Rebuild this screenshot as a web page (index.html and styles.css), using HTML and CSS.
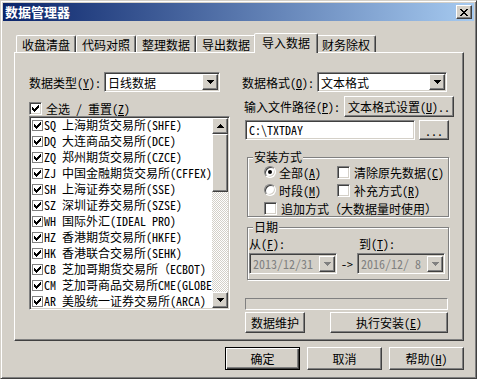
FILE: index.html
```html
<!DOCTYPE html>
<html lang="zh-CN">
<head>
    <meta charset="UTF-8">
    <title>数据管理器</title>
    <link rel="stylesheet" href="styles.css">
</head>
<body>
    <div class="window">
        <div class="titlebar">
            <span class="title">数据管理器</span>
            <span class="close">
                <svg width="8" height="7" viewBox="0 0 8 7"><path d="M0 0h2l2 2.3 2-2.3h2l-3 3.5 3 3.5h-2l-2-2.3-2 2.3h-2l3-3.5z"/></svg>
            </span>
        </div>
        <div class="content">
            <div class="tabs">
                <div class="tab">收盘清盘</div>
                <div class="tab">代码对照</div>
                <div class="tab">整理数据</div>
                <div class="tab">导出数据</div>
                <div class="tab active">导入数据</div>
                <div class="tab">财务除权</div>
            </div>
            <div class="panel">
                <div class="col-left">
                    <div class="row">
                        <span class="label">数据类型(<u>Y</u>):</span>
                        <div class="combo combo-type">
                            <span class="combo-text">日线数据</span>
                            <span class="drop"><svg width="7" height="4"><path d="M0 0h7L3.5 4z"/></svg></span>
                        </div>
                    </div>
                    <div class="check-row">
                        <span class="check"><svg width="7" height="7"><path d="M0 2l2 2 5-4v3l-5 4-2-2z"/></svg></span>
                        <span>全选 / 重置(<u>Z</u>)</span>
                    </div>
                    <div class="list">
                        <div class="list-items">
                            <div class="item"><span class="lc"><svg width="7" height="7"><path d="M0 2l2 2 5-4v3l-5 4-2-2z"/></svg></span>SQ 上海期货交易所(SHFE)</div>
                            <div class="item"><span class="lc"><svg width="7" height="7"><path d="M0 2l2 2 5-4v3l-5 4-2-2z"/></svg></span>DQ 大连商品交易所(DCE)</div>
                            <div class="item"><span class="lc"><svg width="7" height="7"><path d="M0 2l2 2 5-4v3l-5 4-2-2z"/></svg></span>ZQ 郑州期货交易所(CZCE)</div>
                            <div class="item"><span class="lc"><svg width="7" height="7"><path d="M0 2l2 2 5-4v3l-5 4-2-2z"/></svg></span>ZJ 中国金融期货交易所(CFFEX)</div>
                            <div class="item"><span class="lc"><svg width="7" height="7"><path d="M0 2l2 2 5-4v3l-5 4-2-2z"/></svg></span>SH 上海证券交易所(SSE)</div>
                            <div class="item"><span class="lc"><svg width="7" height="7"><path d="M0 2l2 2 5-4v3l-5 4-2-2z"/></svg></span>SZ 深圳证券交易所(SZSE)</div>
                            <div class="item"><span class="lc"><svg width="7" height="7"><path d="M0 2l2 2 5-4v3l-5 4-2-2z"/></svg></span>WH 国际外汇(IDEAL PRO)</div>
                            <div class="item"><span class="lc"><svg width="7" height="7"><path d="M0 2l2 2 5-4v3l-5 4-2-2z"/></svg></span>HZ 香港期货交易所(HKFE)</div>
                            <div class="item"><span class="lc"><svg width="7" height="7"><path d="M0 2l2 2 5-4v3l-5 4-2-2z"/></svg></span>HK 香港联合交易所(SEHK)</div>
                            <div class="item"><span class="lc"><svg width="7" height="7"><path d="M0 2l2 2 5-4v3l-5 4-2-2z"/></svg></span>CB 芝加哥期货交易所（ECBOT)</div>
                            <div class="item"><span class="lc"><svg width="7" height="7"><path d="M0 2l2 2 5-4v3l-5 4-2-2z"/></svg></span>CM 芝加哥商品交易所CME(GLOBEX)</div>
                            <div class="item"><span class="lc"><svg width="7" height="7"><path d="M0 2l2 2 5-4v3l-5 4-2-2z"/></svg></span>AR 美股统一证券交易所(ARCA)</div>
                        </div>
                        <div class="vscroll">
                            <span class="sbtn"><svg width="7" height="4"><path d="M3.5 0L7 4H0z"/></svg></span>
                            <span class="thumb"></span>
                            <span class="track"></span>
                            <span class="sbtn"><svg width="7" height="4"><path d="M0 0h7L3.5 4z"/></svg></span>
                        </div>
                    </div>
                </div>

                <div class="col-right">
                    <div class="row">
                        <span class="label">数据格式(<u>O</u>):</span>
                        <div class="combo combo-format">
                            <span class="combo-text">文本格式</span>
                            <span class="drop"><svg width="7" height="4"><path d="M0 0h7L3.5 4z"/></svg></span>
                        </div>
                    </div>
                    <div class="row row-path">
                        <span class="label">输入文件路径(<u>P</u>):</span>
                        <span class="btn btn-setup">文本格式设置(<u>U</u>)..</span>
                    </div>
                    <div class="row row-input">
                        <span class="field">C:\TXTDAY</span>
                        <span class="btn btn-browse">...</span>
                    </div>

                    <fieldset class="group group-mode">
                        <legend>安装方式</legend>
                        <div class="opts">
                            <div class="opt"><span class="radio on"><span class="dot"></span></span><span class="opt-text">全部(<u>A</u>)</span></div>
                            <div class="opt"><span class="check"></span><span class="opt-text">清除原先数据(<u>C</u>)</span></div>
                            <div class="opt"><span class="radio"></span><span class="opt-text">时段(<u>M</u>)</span></div>
                            <div class="opt"><span class="check"></span><span class="opt-text">补充方式(<u>R</u>)</span></div>
                            <div class="opt opt-wide"><span class="check"></span><span class="opt-text">追加方式（大数据量时使用）</span></div>
                        </div>
                    </fieldset>

                    <fieldset class="group group-date">
                        <legend>日期</legend>
                        <div class="dates">
                            <span class="date-label">从(<u>F</u>):</span>
                            <span></span>
                            <span class="date-label to">到(<u>T</u>):</span>
                            <div class="combo disabled">
                                <span class="combo-text">2013/12/31</span>
                                <span class="drop"><svg width="7" height="4"><path d="M0 0h7L3.5 4z"/></svg></span>
                            </div>
                            <span class="arrow">-&gt;</span>
                            <div class="combo disabled">
                                <span class="combo-text">2016/12/ 8</span>
                                <span class="drop"><svg width="7" height="4"><path d="M0 0h7L3.5 4z"/></svg></span>
                            </div>
                        </div>
                    </fieldset>

                    <div class="progress"></div>
                    <div class="row row-actions">
                        <span class="btn btn-maint">数据维护</span>
                        <span class="btn btn-run">执行安装(<u>E</u>)</span>
                    </div>
                </div>
            </div>

            <div class="dialog-buttons">
                <span class="btn btn-dialog default">确定</span>
                <span class="btn btn-dialog">取消</span>
                <span class="btn btn-dialog">帮助(<u>H</u>)</span>
            </div>
        </div>
    </div>
</body>
</html>
```

FILE: styles.css
```css
body {
    margin: 0;
    font-family: "Noto Sans Mono CJK SC", "Noto Sans CJK SC", sans-serif;
    font-size: 12px;
    color: #000;
    background-color: #d4d0c8;
}
u {
    text-underline-offset: 1px;
}
svg {
    display: block;
    shape-rendering: crispEdges;
}
.window {
    box-sizing: border-box;
    width: 477px;
    height: 379px;
    padding: 2px;
    border: 1px solid;
    border-color: #d4d0c8 #404040 #404040 #d4d0c8;
    box-shadow: inset 1px 1px #fff, inset -1px -1px #808080;
    background-color: #d4d0c8;
}
.titlebar {
    height: 18px;
    padding: 0 2px;
    display: flex;
    align-items: center;
    justify-content: space-between;
    background: linear-gradient(to right, #0a246a, #a6caf0);
}
.title {
    color: #fff;
    font-family: "Noto Sans CJK SC", sans-serif;
    font-weight: bold;
    font-size: 13px;
    line-height: 18px;
}
.close {
    box-sizing: border-box;
    width: 16px;
    height: 14px;
    display: flex;
    align-items: center;
    justify-content: center;
    border: 1px solid;
    border-color: #fff #404040 #404040 #fff;
    box-shadow: inset -1px -1px #808080;
    background-color: #d4d0c8;
}
.content {
    padding: 12px 10px 0 11px;
}

/* tabs */
.tabs {
    height: 19px;
    padding-left: 2px;
    display: flex;
    align-items: flex-end;
}
.tab {
    box-sizing: border-box;
    width: 60px;
    height: 17px;
    padding-top: 2px;
    border: 1px solid;
    border-bottom: 0;
    border-color: #fff #404040 transparent #fff;
    border-radius: 2px 2px 0 0;
    box-shadow: inset -1px 0 #808080;
    text-align: center;
    line-height: 14px;
}
.tab.active {
    width: 64px;
    height: 20px;
    margin: 0 -2px -1px;
    position: relative;
    z-index: 1;
    background-color: #d4d0c8;
}
.panel {
    box-sizing: border-box;
    width: 450px;
    height: 289px;
    padding: 19px 0 0 14px;
    display: flex;
    border: 1px solid;
    border-color: #fff #404040 #404040 #fff;
    box-shadow: inset -1px -1px #808080;
}
.col-left {
    width: 201px;
    display: flex;
    flex-direction: column;
}
.col-right {
    width: 212px;
    margin-left: 12px;
    display: flex;
    flex-direction: column;
}
.row {
    height: 20px;
    display: flex;
    align-items: center;
    white-space: nowrap;
}

/* common 3d bits */
.combo, .field, .check, .list {
    border: 1px solid;
    border-color: #808080 #fff #fff #808080;
    box-shadow: inset 1px 1px #404040, inset -1px -1px #d4d0c8;
    background-color: #fff;
}
.btn, .drop, .sbtn, .thumb {
    box-sizing: border-box;
    border: 1px solid;
    border-color: #fff #404040 #404040 #fff;
    box-shadow: inset -1px -1px #808080;
    background-color: #d4d0c8;
    display: flex;
    align-items: center;
    justify-content: center;
}
.combo {
    box-sizing: border-box;
    height: 20px;
    margin-left: 3px;
    padding: 1px 1px 1px 3px;
    display: flex;
    align-items: center;
    justify-content: space-between;
}
.combo-type {
    width: 116px;
}
.combo-format {
    width: 130px;
}
.drop {
    width: 16px;
    height: 16px;
}
.combo.disabled {
    margin-left: 0;
    height: 21px;
    background-color: #d4d0c8;
    color: #808080;
}
.combo.disabled svg {
    fill: #808080;
}
.check {
    box-sizing: border-box;
    width: 13px;
    height: 13px;
    flex-shrink: 0;
    display: flex;
    align-items: center;
    justify-content: center;
}

/* left column */
.check-row {
    height: 16px;
    margin-top: 8px;
    display: flex;
    align-items: center;
    gap: 4px;
}
.list {
    box-sizing: border-box;
    height: 194px;
    padding: 1px;
    display: flex;
}
.list-items {
    flex: 1;
    margin: -1px 0;
    overflow: hidden;
}
.item {
    height: 16px;
    padding-left: 1px;
    display: flex;
    align-items: center;
    white-space: pre;
    line-height: 16px;
}
.lc {
    box-sizing: border-box;
    width: 11px;
    height: 11px;
    margin-right: 1px;
    flex-shrink: 0;
    border: 1px solid #808080;
    background-color: #fff;
    display: flex;
    align-items: center;
    justify-content: center;
}
.vscroll {
    width: 16px;
    display: flex;
    flex-direction: column;
}
.sbtn {
    height: 16px;
}
.thumb {
    height: 58px;
}
.track {
    flex: 1;
    background: repeating-conic-gradient(#fff 0 25%, #d4d0c8 0 50%) 0 0 / 2px 2px;
}

/* right column */
.row-path {
    height: 21px;
    margin-top: 4px;
}
.row-path .label {
    margin-left: 2px;
}
.btn-setup {
    width: 110px;
    height: 21px;
    margin-left: 4px;
}
.row-input {
    margin-top: 3px;
}
.field {
    box-sizing: border-box;
    width: 170px;
    height: 20px;
    margin-left: 3px;
    padding-left: 3px;
    line-height: 18px;
}
.btn-browse {
    width: 30px;
    height: 20px;
    margin-left: 4px;
}
.group {
    margin: 11px 0 0 5px;
    padding: 0;
    width: 202px;
    box-sizing: border-box;
    border: 1px solid #808080;
    box-shadow: inset 1px 1px #fff, 1px 1px #fff;
}
.group legend {
    margin-left: 5px;
    padding: 0 1px;
    line-height: 12px;
    background-color: #d4d0c8;
}
.opts {
    padding: 1px 0 0 16px;
    display: grid;
    grid-template-columns: 73px auto;
    row-gap: 2px;
}
.opt {
    height: 16px;
    display: flex;
    align-items: center;
    gap: 4px;
    white-space: nowrap;
}
.opt-wide {
    grid-column: 1 / 3;
}
.radio {
    box-sizing: border-box;
    width: 12px;
    height: 12px;
    margin-right: -1px;
    border-radius: 50%;
    border: 1px solid;
    border-color: #808080 #fff #fff #808080;
    box-shadow: inset 1px 1px #404040, inset -1px -1px #d4d0c8;
    background-color: #fff;
    display: flex;
    align-items: center;
    justify-content: center;
}
.dot {
    width: 4px;
    height: 4px;
    border-radius: 50%;
    background-color: #000;
}
.group-date {
    margin-top: 4px;
}
.dates {
    padding: 3px 0 5px 1px;
    display: grid;
    grid-template-columns: 88px 20px 88px;
    grid-template-rows: 16px 21px;
    row-gap: 1px;
}
.date-label {
    line-height: 16px;
    white-space: nowrap;
}
.date-label.to {
    padding-left: 2px;
}
.arrow {
    display: flex;
    align-items: center;
    justify-content: center;
}
.progress {
    width: 203px;
    height: 12px;
    margin: 18px 0 0 3px;
    box-sizing: border-box;
    border: 1px solid;
    border-color: #808080 #fff #fff #808080;
}
.row-actions {
    height: 21px;
    margin-top: 2px;
}
.btn-maint {
    width: 60px;
    height: 21px;
    margin-left: 3px;
}
.btn-run {
    width: 118px;
    height: 21px;
    margin-left: 25px;
}

/* dialog buttons */
.dialog-buttons {
    margin-top: 6px;
    display: flex;
    justify-content: flex-end;
    gap: 7px;
}
.btn-dialog {
    width: 75px;
    height: 23px;
}
.btn-dialog.default {
    border-color: #000;
    box-shadow: inset 1px 1px #fff, inset -1px -1px #404040, inset -2px -2px #808080;
}
```
